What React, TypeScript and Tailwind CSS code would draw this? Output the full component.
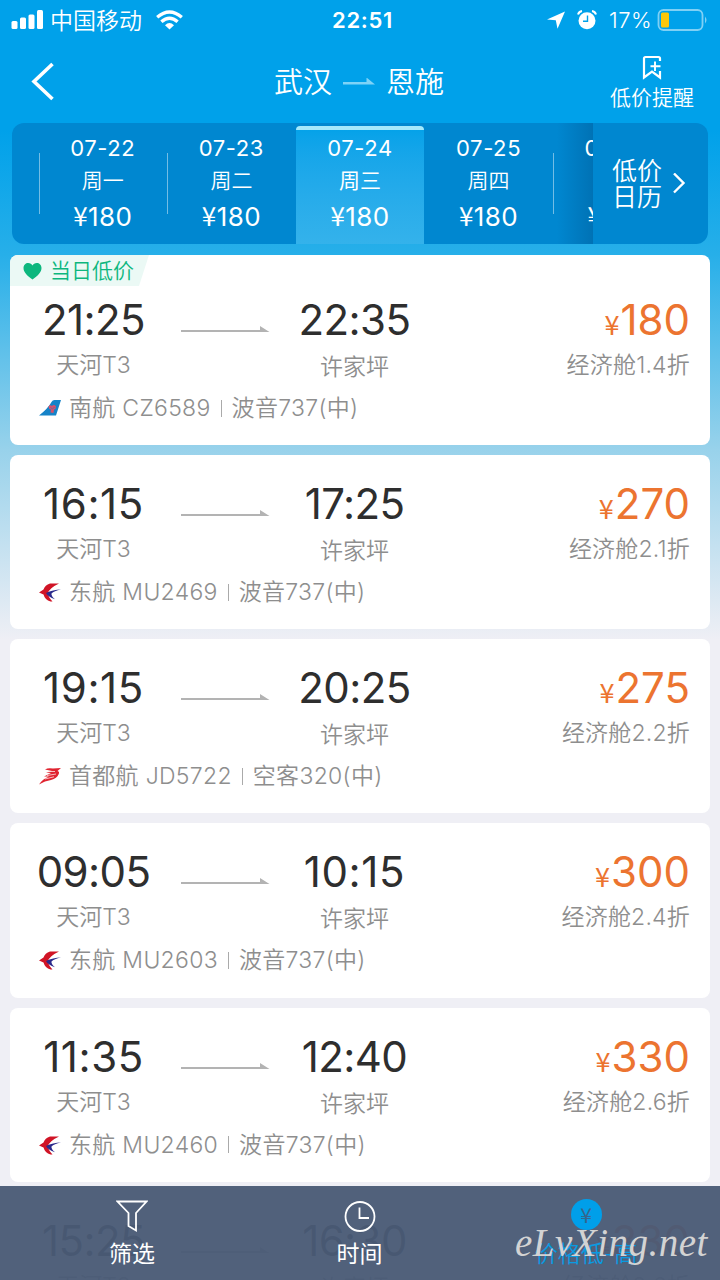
import { ReactNode } from "react";

type Carrier = "southern" | "eastern" | "capital";

const dates = [
    { day: "07-22", week: "周一", price: "180" },
    { day: "07-23", week: "周二", price: "180" },
    { day: "07-24", week: "周三", price: "180", active: true },
    { day: "07-25", week: "周四", price: "180" },
    { day: "07-26", week: "周五", price: "180" }
];

const flights: {
    depart: string;
    arrive: string;
    price: string;
    cabin: string;
    carrier: Carrier;
    flight: string;
    plane: string;
    lowest?: boolean;
}[] = [
    { depart: "21:25", arrive: "22:35", price: "180", cabin: "经济舱1.4折", carrier: "southern", flight: "南航 CZ6589", plane: "波音737(中)", lowest: true },
    { depart: "16:15", arrive: "17:25", price: "270", cabin: "经济舱2.1折", carrier: "eastern", flight: "东航 MU2469", plane: "波音737(中)" },
    { depart: "19:15", arrive: "20:25", price: "275", cabin: "经济舱2.2折", carrier: "capital", flight: "首都航 JD5722", plane: "空客320(中)" },
    { depart: "09:05", arrive: "10:15", price: "300", cabin: "经济舱2.4折", carrier: "eastern", flight: "东航 MU2603", plane: "波音737(中)" },
    { depart: "11:35", arrive: "12:40", price: "330", cabin: "经济舱2.6折", carrier: "eastern", flight: "东航 MU2460", plane: "波音737(中)" },
    { depart: "15:25", arrive: "16:30", price: "330", cabin: "经济舱2.6折", carrier: "eastern", flight: "东航 MU2452", plane: "波音737(中)" }
];

function CarrierLogo({ carrier }: { carrier: Carrier }) {
    return (
        <svg className="w-[22px] h-[20px] shrink-0" viewBox="0 0 22 20" fill="none">
            {carrier === "southern" && (
                <>
                    <path d="M0 17.500 Q9 10.500 12.500 4 Q13.500 2 15.500 2 H22 L17 17.500 Z" fill="#1583c8" />
                    <path d="M9.500 8.500 Q11 6.500 13 8 Q15 6 17 8.500 Q17 11 15 11.500 L14.500 15 L11.500 14.500 L12 11.500 Q9.500 11 9.500 8.500 Z" fill="#d8506a" />
                    <path d="M11.500 9.500 L13.500 11 L15.500 9" stroke="#4a6ca8" strokeWidth=".8" />
                </>
            )}
            {carrier === "eastern" && (
                <>
                    <path d="M20 1.500 H11 Q6 3 4.500 7.500 L0 10.500 L4.500 12.500 Q6 18 11.500 19.500 L13.500 19.500 Q9 15 9 11 Q10.500 6 20 1.500 Z" fill="#d01426" />
                    <path d="M22 7.500 Q14 7.500 7 11 Q9 15 16 17.200 Q12 14 12.500 11.500 Q15 9 22 7.500 Z" fill="#2b2a8c" />
                </>
            )}
            {carrier === "capital" && (
                <>
                    <path d="M6 3.500 Q9 1.500 14 2.500 L22 2 L18.500 5 Q21 5.500 19.500 8.500 Q18 12 12 14 Q6 14.500 0 18.500 Q3.500 13 10 10.500 L5 10.500 L12 7 L7 6.500 L13 5 Z" fill="#e02430" />
                    <path d="M9 5.500 L16 5.500 M8 9.500 L17 8 M6 13 L15 10.800" stroke="#fff" strokeWidth=".7" />
                </>
            )}
        </svg>
    );
}

function StatusBar() {
    return (
        <div className="flex h-10 shrink-0 items-center text-white">
            <svg className="ml-[11px] h-[20px] w-[33px]" viewBox="0 0 33 20" fill="currentColor">
                <rect x=".5" y="11" width="6" height="8" rx="1.500" />
                <rect x="9" y="7.500" width="6" height="11.500" rx="1.500" />
                <rect x="17.500" y="4.500" width="6" height="14.500" rx="1.500" />
                <rect x="26" y="0" width="6" height="19" rx="1.500" />
            </svg>
            <span className="ml-[6px] w-[94px] pt-px text-[23px] font-[350] leading-10">中国移动</span>
            <svg className="ml-[12px] h-[20px] w-[27px]" viewBox="0 0 27 20" fill="none" stroke="currentColor" strokeWidth="3.400">
                <path d="M1.200 7.200 Q13.500 -3.200 25.800 7.200" />
                <path d="M5.400 11.700 Q13.500 4.600 21.600 11.700" />
                <path d="M9 15.200 Q13.500 11 18 15.200 L13.500 19.500 Z" fill="currentColor" stroke="none" />
            </svg>
            <span className="ml-[149px] w-[64px] text-[22px] font-semibold tracking-[0.7px]">22:51</span>
            <svg className="ml-[151px] h-[18px] w-[19px]" viewBox="0 0 19 18" fill="currentColor">
                <path d="M18 .5 L0 8.500 L8.800 9.200 L10.500 17.800 Z" />
            </svg>
            <svg className="ml-[11px] h-[20px] w-[20px]" viewBox="0 0 20 20" fill="none" stroke="currentColor">
                <circle cx="10" cy="10.800" r="8.500" fill="currentColor" stroke="none" />
                <path d="M1 4.500 Q2 1.500 5 1 M19 4.500 Q18 1.500 15 1" strokeWidth="2" />
                <path d="M10.500 5.500 V11.200 H6" stroke="#00a1ea" strokeWidth="1.400" />
            </svg>
            <span className="ml-[12px] w-[46px] text-[22px] font-[350] tracking-[0.5px]">17%</span>
            <svg className="ml-[2px] h-[24px] w-[52px]" viewBox="0 0 52 24" fill="none">
                <rect x="1.500" y="2" width="44" height="20" rx="5" stroke="#7fd0f5" strokeWidth="1.800" />
                <rect x="4" y="4.500" width="8" height="15" rx="1.500" fill="#fcc70a" />
                <path d="M48 8.500 Q51 12 48 15.500 Z" fill="#7fd0f5" />
            </svg>
        </div>
    );
}

function NavBar() {
    return (
        <div className="grid h-[83px] shrink-0 grid-cols-[200px_1fr_200px] items-center text-white">
            <svg className="ml-[31px] h-[40px] w-[24px]" viewBox="0 0 24 40" fill="none" stroke="currentColor" strokeWidth="3.600">
                <path d="M21.500 2 L3 19.500 L21.500 37" />
            </svg>
            <div className="flex items-center justify-center pt-[2px] pr-[2px] text-[29px] font-[350] leading-10">
                <span>武汉</span>
                <svg className="mx-[11px] h-[10px] w-[32px]" viewBox="0 0 32 10">
                    <path d="M0 4 H23.500 V-.5 L32 6.500 H0 Z" fill="#7fd3f7" />
                </svg>
                <span>恩施</span>
            </div>
            <div className="mr-[26px] flex flex-col items-center justify-self-end pt-[4px]">
                <svg className="h-[25px] w-[20px]" viewBox="0 0 20 25" fill="none" stroke="currentColor" strokeWidth="2.200">
                    <path d="M18 6 V3.500 Q18 2 16.500 2 H3.500 Q2 2 2 3.500 V22.500 L10 16.500 L18 22.500 V16" />
                    <path d="M13 6.500 V16 M8.500 11.200 H18.500" strokeWidth="1.900" />
                </svg>
                <span className="mt-[4px] text-[21px] font-[350] leading-[28px]">低价提醒</span>
            </div>
        </div>
    );
}

function DateStrip() {
    return (
        <div className="mx-3 flex h-[121px] shrink-0 overflow-hidden rounded-xl bg-[#0087d0] text-white">
            <div className="relative flex w-[581px] shrink-0 overflow-hidden pl-[26.500px]">
                <div className="absolute right-0 top-0 h-full w-9 bg-linear-to-r from-transparent to-[#0072b5]" />
                {dates.map((d, i) => (
                    <div
                        key={d.day}
                        className={`relative flex w-[128.600px] shrink-0 flex-col items-center ${
                            d.active
                                ? "mt-[3px] rounded-t-sm border-t-4 border-[#a5e9fc] bg-linear-to-b from-[#05a2e9] to-[#34b2eb] pt-[3px]"
                                : "pt-[10px]"
                        }`}
                    >
                        {!d.active && i !== 3 && <span className="absolute left-0 top-[30px] h-[61px] w-px bg-white/45" />}
                        <span className="text-[22px] leading-[30px] tracking-[0.6px]">{d.day}</span>
                        <span className={`mt-[3px] text-[21px] leading-[30px] ${d.active ? "font-normal" : "font-[350]"}`}>{d.week}</span>
                        <span className="mt-[5px] text-[26px] leading-[32px] tracking-[0.400px]">
                            <span className="font-['Noto_Sans_CJK_SC'] leading-none">¥</span>
                            {d.price}
                        </span>
                    </div>
                ))}
            </div>
            <div className="flex flex-1 items-center gap-[9px] pl-[19px]">
                <span className="w-[51px] text-[25px] font-[350] leading-[26px]">低价日历</span>
                <svg className="h-[22px] w-[14px]" viewBox="0 0 14 22" fill="none" stroke="currentColor" strokeWidth="2.400">
                    <path d="M2 .5 L11.500 10 L2 19.500" />
                </svg>
            </div>
        </div>
    );
}

function Time({ value }: { value: string }) {
    // the digit 1 is narrow, so times with two of them are spaced a little wider
    const narrow = value.split("1").length > 2;
    return (
        <div className={`text-[42px] font-normal leading-[44px] text-[#2e2e2e] ${narrow ? "tracking-[0.600px]" : "tracking-[-0.600px]"}`}>
            {value}
        </div>
    );
}

function FlightCard({ f }: { f: (typeof flights)[number] }) {
    return (
        <div className={`relative shrink-0 overflow-hidden rounded-lg bg-white ${f.lowest ? "h-[190px] pt-[43px]" : "h-[174.200px] pt-[27px]"}`}>
            {f.lowest && (
                <div className="absolute left-0 top-0 flex h-[31px] w-[139px] items-center bg-[#ebf9f5] pl-[13px] [clip-path:polygon(0_0,100%_0,calc(100%-10px)_100%,0_100%)]">
                    <svg className="h-[18px] w-[19px]" viewBox="0 0 19 18" fill="#0db77e">
                        <path d="M9.500 17.500 C5 14.500 .5 10.500 .5 6 C.5 3 2.700 1 5.200 1 C7.200 1 8.700 2 9.500 3.500 C10.300 2 11.800 1 13.800 1 C16.300 1 18.500 3 18.500 6 C18.500 10.500 14 14.500 9.500 17.500 Z" />
                    </svg>
                    <span className="ml-[8px] text-[21px] font-[350] leading-[30px] text-[#0db77e]">当日低价</span>
                </div>
            )}
            <div className="flex items-start pr-[20px]">
                <div className="ml-[13px] w-[141px] text-center">
                    <Time value={f.depart} />
                    <div className="mt-[9px] text-[23px] font-[350] leading-[28px] text-[#8e8e8e]">天河T3</div>
                </div>
                <svg className="ml-[17px] mt-[27px] h-[9px] w-[89px]" viewBox="0 0 89 9">
                    <path d="M0 5 H79 V1 L88.500 7 H0 Z" fill="#b3b3b3" />
                </svg>
                <div className="ml-[14px] w-[141px] text-center">
                    <Time value={f.arrive} />
                    <div className="mt-[11px] text-[23px] font-[350] leading-[28px] text-[#8e8e8e]">许家坪</div>
                </div>
                <div className="flex-1 text-right">
                    <div className="h-[44px] text-[42px] font-normal leading-[44px] text-[#ec7430]">
                        <span className="mr-[1px] font-['Noto_Sans_CJK_SC'] text-[27px] leading-none">¥</span>
                        {f.price}
                    </div>
                    <div className="mt-[9px] text-[23px] font-[350] leading-[28px] tracking-[0.200px] text-[#8e8e8e]">{f.cabin}</div>
                </div>
            </div>
            <div className="ml-[29px] mt-[13px] flex items-center text-[23px] font-[350] leading-[28px] text-[#8e8e8e]">
                <CarrierLogo carrier={f.carrier} />
                <span className="ml-[8px] tracking-[0.300px]">{f.flight}</span>
                <span className="mx-[10px] h-[17px] w-px bg-[#aaa]" />
                <span className="tracking-[0.300px]">{f.plane}</span>
            </div>
        </div>
    );
}

function TabItem({ icon, label, className }: { icon: ReactNode; label: string; className: string }) {
    return (
        <div className={`flex flex-col items-center pt-[13px] ${className}`}>
            {icon}
            <span className="mt-[4px] text-[23px] leading-[34px]">{label}</span>
        </div>
    );
}

function BottomBar() {
    return (
        <div className="absolute bottom-0 left-0 flex h-[94px] w-full bg-[#4a5b76]/96 pl-[18px]">
            <TabItem
                className="w-[228px] text-white"
                label="筛选"
                icon={
                    <svg className="h-[34px] w-[32px]" viewBox="0 0 32 34" fill="none" stroke="currentColor" strokeWidth="1.800">
                        <path d="M1.500 2.500 H30.500 L20 14 V31.500 L12.500 27 V14 Z" />
                    </svg>
                }
            />
            <TabItem
                className="w-[227px] text-white"
                label="时间"
                icon={
                    <svg className="h-[34px] w-[32px]" viewBox="0 0 32 34" fill="none" stroke="currentColor" strokeWidth="1.800">
                        <circle cx="16" cy="17.500" r="14.500" />
                        <path d="M15.500 8.500 V19 H25" />
                    </svg>
                }
            />
            <TabItem
                className="w-[226px] font-[350] text-[#0a9be2]"
                label="价格低-高"
                icon={
                    <span className="flex h-[34px] items-center">
                        <span className="mb-[4px] flex h-[31px] w-[31px] items-center justify-center rounded-full bg-[#009fe9] font-['Noto_Sans_CJK_SC'] text-[21px] font-normal leading-none text-[#37658c]">¥</span>
                    </span>
                }
            />
            <span className="absolute left-[515px] top-[33px] whitespace-nowrap font-['Liberation_Serif'] text-[39px] italic leading-[48px] tracking-[0.500px] text-[#d3d3d3]">
                eLvXing.net
            </span>
        </div>
    );
}

export default function App() {
    return (
        <div className="relative flex h-[1280px] w-[720px] flex-col overflow-hidden bg-[#efeff5] bg-[linear-gradient(180deg,#00a1ea_0px,#00a1ea_130px,#27afe9_255px,#98d2eb_450px,#efeff5_640px)] font-['Inter','Noto_Sans_CJK_SC',sans-serif]">
            <StatusBar />
            <NavBar />
            <DateStrip />
            <main className="flex min-h-0 flex-1 flex-col gap-[10px] px-[10px] pt-[11px]">
                {flights.map((f) => (
                    <FlightCard key={f.flight} f={f} />
                ))}
            </main>
            <BottomBar />
        </div>
    );
}
